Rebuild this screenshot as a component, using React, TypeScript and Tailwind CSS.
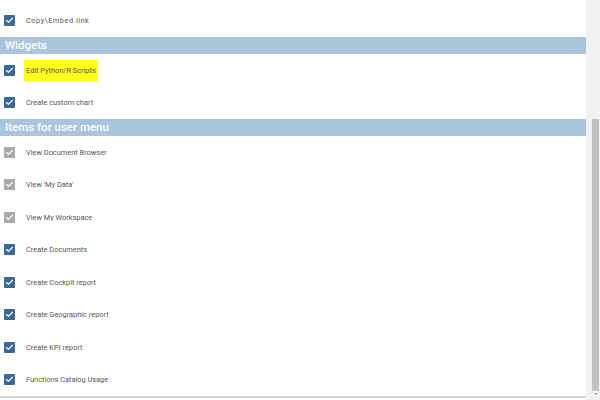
import { Check } from "lucide-react";

type Item = { label: string; disabled?: boolean; highlight?: boolean; wide?: boolean };

const widgets: Item[] = [
  { label: "Edit Python/R Scripts", highlight: true },
  { label: "Create custom chart" },
];

const userMenu: Item[] = [
  { label: "View Document Browser", disabled: true },
  { label: "View 'My Data'", disabled: true },
  { label: "View My Workspace", disabled: true },
  { label: "Create Documents" },
  { label: "Create Cockpit report" },
  { label: "Create Geographic report" },
  { label: "Create KPI report" },
  { label: "Functions Catalog Usage" },
];

function Row({ label, disabled, highlight, wide }: Item) {
  return (
    <div className="flex h-[32.5px] items-center">
      <span
        className={`ml-[4px] flex h-[11px] w-[11px] items-center justify-center rounded-[1px] ${
          disabled ? "bg-[#a9a9a9]" : "bg-[#3d6890]"
        }`}
      >
        <Check className="h-[9px] w-[9px] text-white" strokeWidth={3} />
      </span>
      <span
        className={`ml-[9px] text-[7.4px] text-[#555] ${wide ? "tracking-[0.5px]" : ""} ${
          highlight ? "bg-[#ffff1a] px-[2px] py-[5px]" : "px-[2px]"
        }`}
      >
        {label}
      </span>
    </div>
  );
}

function Header({ title }: { title: string }) {
  return (
    <div className="flex h-[17px] items-center bg-[#a9c4dc] pl-[5px] text-[11.5px] font-medium text-white">
      {title}
    </div>
  );
}

export default function App() {
  return (
    <div className="flex h-[400px] w-[600px] overflow-hidden bg-white font-['Roboto',sans-serif]">
      <div className="flex w-[586px] flex-col">
        <div className="h-[4.5px]" />
        <Row label="Copy\Embed link" wide />
        <Header title="Widgets" />
        {widgets.map((it) => (
          <Row key={it.label} {...it} />
        ))}
        <Header title="Items for user menu" />
        {userMenu.map((it) => (
          <Row key={it.label} {...it} />
        ))}
        <div className="h-[2px] bg-[#d4d4d4]" />
      </div>
      {/* scrollbar */}
      <div className="flex w-[14px] flex-col bg-[#f1f1f1] pl-[6px] pr-[1px]">
        <div className="h-[119px]" />
        <div className="h-[272px] bg-[#c1c1c1]" />
        <div className="flex flex-1 items-start justify-center pt-[2px]">
          <span className="h-0 w-0 border-x-[2px] border-t-[2px] border-x-transparent border-t-[#a3a3a3]" />
        </div>
      </div>
    </div>
  );
}
